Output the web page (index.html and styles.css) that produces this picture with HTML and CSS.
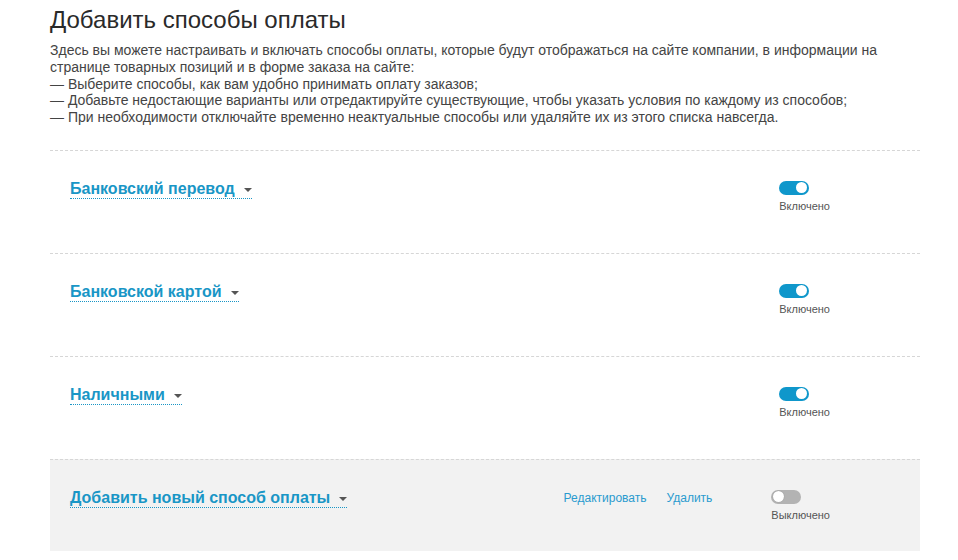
FILE: index.html
```html
<!DOCTYPE html>
<html lang="ru">
<head>
<meta charset="utf-8">
<title>Добавить способы оплаты</title>
<link rel="stylesheet" href="styles.css">
</head>
<body>
<div class="page">
  <h1 class="title">Добавить способы оплаты</h1>
  <div class="intro">
    <p>Здесь вы можете настраивать и включать способы оплаты, которые будут отображаться на сайте компании, в информации на странице товарных позиций и в форме заказа на сайте:</p>
    <p>— Выберите способы, как вам удобно принимать оплату заказов;</p>
    <p>— Добавьте недостающие варианты или отредактируйте существующие, чтобы указать условия по каждому из способов;</p>
    <p>— При необходимости отключайте временно неактуальные способы или удаляйте их из этого списка навсегда.</p>
  </div>

  <div class="methods">
    <div class="method">
      <span class="method-name">Банковский перевод<span class="caret"></span></span>
      <div class="state">
        <span class="switch on"><span class="knob"></span></span>
        <span class="state-label">Включено</span>
      </div>
    </div>
    <div class="method">
      <span class="method-name">Банковской картой<span class="caret"></span></span>
      <div class="state">
        <span class="switch on"><span class="knob"></span></span>
        <span class="state-label">Включено</span>
      </div>
    </div>
    <div class="method">
      <span class="method-name">Наличными<span class="caret"></span></span>
      <div class="state">
        <span class="switch on"><span class="knob"></span></span>
        <span class="state-label">Включено</span>
      </div>
    </div>
    <div class="method method-new">
      <span class="method-name">Добавить новый способ оплаты<span class="caret"></span></span>
      <div class="actions">
        <a class="action" href="#">Редактировать</a>
        <a class="action" href="#">Удалить</a>
      </div>
      <div class="state">
        <span class="switch off"><span class="knob"></span></span>
        <span class="state-label">Выключено</span>
      </div>
    </div>
  </div>
</div>
</body>
</html>
```

FILE: styles.css
```css
html, body {
  margin: 0;
  padding: 0;
  background: #fff;
}

body {
  font-family: "Liberation Sans", Arial, sans-serif;
  color: #333;
}

.page {
  width: 870px;
  padding: 0 38px 0 50px;
}

.title {
  margin: 5px 0 0 0;
  font-size: 24px;
  line-height: 30px;
  font-weight: normal;
  color: #2a2a2a;
}

.intro {
  margin-top: 7px;
  font-size: 14px;
  line-height: 16.8px;
  color: #444;
}

.intro p {
  margin: 0;
}

.methods {
  margin-top: 24px;
}

.method {
  display: flex;
  align-items: flex-start;
  height: 73px;
  padding: 29px 90px 0 20px;
  border-top: 1px dashed #d6d6d6;
}

.method-new {
  height: 62px;
  background: #f2f2f2;
}

.method-name {
  display: inline-flex;
  align-items: center;
  font-size: 16px;
  line-height: 18px;
  font-weight: bold;
  color: #1996c6;
  border-bottom: 1px dotted #1996c6;
  cursor: pointer;
}

.caret {
  display: inline-block;
  width: 0;
  height: 0;
  margin-left: 9px;
  margin-top: 2px;
  border-left: 4px solid transparent;
  border-right: 4px solid transparent;
  border-top: 4px solid #555;
}

.actions {
  display: flex;
  gap: 20px;
  margin-left: auto;
  margin-right: 59px;
  padding-top: 2px;
  font-size: 12px;
  line-height: 14px;
}

.action {
  color: #2a9bcf;
  text-decoration: none;
}

.state {
  display: flex;
  flex-direction: column;
  align-items: flex-start;
  margin-left: auto;
  padding-top: 1px;
}

.actions + .state {
  margin-left: 0;
}

.switch {
  position: relative;
  display: block;
  width: 30px;
  height: 14px;
  border-radius: 7px;
  box-sizing: border-box;
}

.switch.on {
  background: #0f97cb;
}

.switch.off {
  background: #b3b3b3;
}

.knob {
  position: absolute;
  top: 1.5px;
  width: 11px;
  height: 11px;
  border-radius: 50%;
  background: #fff;
}

.switch.on .knob {
  right: 2px;
}

.switch.off .knob {
  left: 2px;
  box-shadow: 0 0 1px rgba(0, 0, 0, 0.3);
}

.state-label {
  margin-top: 5px;
  font-size: 11px;
  line-height: 13px;
  color: #555;
}
```
